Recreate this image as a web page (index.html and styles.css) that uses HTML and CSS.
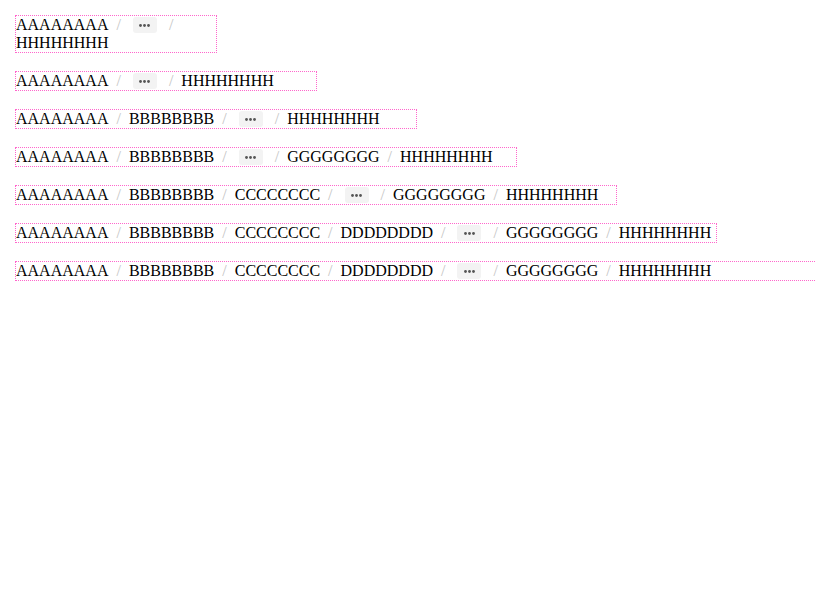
FILE: index.html
```html
<!DOCTYPE html>
<html>
<head>
<meta charset="utf-8">
<link rel="stylesheet" href="styles.css">
</head>
<body>
<div class="crumbs w200">
  <span class="item">AAAAAAAA</span><span class="sep">/</span><span class="more"><svg width="11" height="3" viewBox="0 0 11 3"><circle cx="1.5" cy="1.5" r="1.4"/><circle cx="5.5" cy="1.5" r="1.4"/><circle cx="9.5" cy="1.5" r="1.4"/></svg></span><span class="sep">/</span><span class="item">HHHHHHHH</span>
</div>
<div class="crumbs w300">
  <span class="item">AAAAAAAA</span><span class="sep">/</span><span class="more"><svg width="11" height="3" viewBox="0 0 11 3"><circle cx="1.5" cy="1.5" r="1.4"/><circle cx="5.5" cy="1.5" r="1.4"/><circle cx="9.5" cy="1.5" r="1.4"/></svg></span><span class="sep">/</span><span class="item">HHHHHHHH</span>
</div>
<div class="crumbs w400">
  <span class="item">AAAAAAAA</span><span class="sep">/</span><span class="item">BBBBBBBB</span><span class="sep">/</span><span class="more"><svg width="11" height="3" viewBox="0 0 11 3"><circle cx="1.5" cy="1.5" r="1.4"/><circle cx="5.5" cy="1.5" r="1.4"/><circle cx="9.5" cy="1.5" r="1.4"/></svg></span><span class="sep">/</span><span class="item">HHHHHHHH</span>
</div>
<div class="crumbs w500">
  <span class="item">AAAAAAAA</span><span class="sep">/</span><span class="item">BBBBBBBB</span><span class="sep">/</span><span class="more"><svg width="11" height="3" viewBox="0 0 11 3"><circle cx="1.5" cy="1.5" r="1.4"/><circle cx="5.5" cy="1.5" r="1.4"/><circle cx="9.5" cy="1.5" r="1.4"/></svg></span><span class="sep">/</span><span class="item">GGGGGGGG</span><span class="sep">/</span><span class="item">HHHHHHHH</span>
</div>
<div class="crumbs w600">
  <span class="item">AAAAAAAA</span><span class="sep">/</span><span class="item">BBBBBBBB</span><span class="sep">/</span><span class="item">CCCCCCCC</span><span class="sep">/</span><span class="more"><svg width="11" height="3" viewBox="0 0 11 3"><circle cx="1.5" cy="1.5" r="1.4"/><circle cx="5.5" cy="1.5" r="1.4"/><circle cx="9.5" cy="1.5" r="1.4"/></svg></span><span class="sep">/</span><span class="item">GGGGGGGG</span><span class="sep">/</span><span class="item">HHHHHHHH</span>
</div>
<div class="crumbs w700">
  <span class="item">AAAAAAAA</span><span class="sep">/</span><span class="item">BBBBBBBB</span><span class="sep">/</span><span class="item">CCCCCCCC</span><span class="sep">/</span><span class="item">DDDDDDDD</span><span class="sep">/</span><span class="more"><svg width="11" height="3" viewBox="0 0 11 3"><circle cx="1.5" cy="1.5" r="1.4"/><circle cx="5.5" cy="1.5" r="1.4"/><circle cx="9.5" cy="1.5" r="1.4"/></svg></span><span class="sep">/</span><span class="item">GGGGGGGG</span><span class="sep">/</span><span class="item">HHHHHHHH</span>
</div>
<div class="crumbs w800">
  <span class="item">AAAAAAAA</span><span class="sep">/</span><span class="item">BBBBBBBB</span><span class="sep">/</span><span class="item">CCCCCCCC</span><span class="sep">/</span><span class="item">DDDDDDDD</span><span class="sep">/</span><span class="more"><svg width="11" height="3" viewBox="0 0 11 3"><circle cx="1.5" cy="1.5" r="1.4"/><circle cx="5.5" cy="1.5" r="1.4"/><circle cx="9.5" cy="1.5" r="1.4"/></svg></span><span class="sep">/</span><span class="item">GGGGGGGG</span><span class="sep">/</span><span class="item">HHHHHHHH</span>
</div>
</body>
</html>
```
FILE: styles.css
```css
html, body {
  margin: 0;
  background: #fff;
}
body {
  padding: 15px;
  font-family: "Liberation Serif", "Times New Roman", serif;
  font-size: 16px;
  color: #000;
}
.crumbs {
  display: flex;
  flex-wrap: wrap;
  align-items: center;
  border: 1px dotted #ff66cc;
  line-height: 18px;
  margin-bottom: 18px;
  box-sizing: content-box;
}
.w200 { width: 200px; }
.w300 { width: 300px; }
.w400 { width: 400px; }
.w500 { width: 500px; }
.w600 { width: 600px; }
.w700 { width: 700px; }
.w800 { width: 800px; }
.item {
  white-space: nowrap;
}
.sep {
  color: #c4c4c4;
  padding: 0 8px;
}
.more {
  display: inline-flex;
  align-items: center;
  justify-content: center;
  width: 24px;
  height: 16px;
  margin: 0 4px;
  background: #f3f3f3;
  border-radius: 3px;
}
.more svg {
  fill: #555;
}
```
